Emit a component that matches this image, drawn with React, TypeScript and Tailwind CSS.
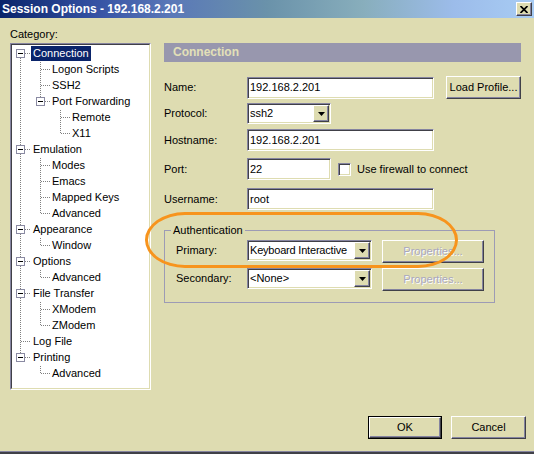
import React from 'react';

// Classic Win2000-style 3D edges, tinted for this colour scheme
const sunken =
  'border border-t-[#8584a0] border-l-[#8584a0] border-r-white border-b-white shadow-[inset_1px_1px_0_#404048,inset_-1px_-1px_0_#dedcb1]';
const raised =
  'border border-t-white border-l-white border-r-[#404048] border-b-[#404048] shadow-[inset_-1px_-1px_0_#8584a0]';

interface TreeNode {
  label: string;
  level: number;
  box?: boolean;
  selected?: boolean;
}

const tree: TreeNode[] = [
  { label: 'Connection', level: 0, box: true, selected: true },
  { label: 'Logon Scripts', level: 1 },
  { label: 'SSH2', level: 1 },
  { label: 'Port Forwarding', level: 1, box: true },
  { label: 'Remote', level: 2 },
  { label: 'X11', level: 2 },
  { label: 'Emulation', level: 0, box: true },
  { label: 'Modes', level: 1 },
  { label: 'Emacs', level: 1 },
  { label: 'Mapped Keys', level: 1 },
  { label: 'Advanced', level: 1 },
  { label: 'Appearance', level: 0, box: true },
  { label: 'Window', level: 1 },
  { label: 'Options', level: 0, box: true },
  { label: 'Advanced', level: 1 },
  { label: 'File Transfer', level: 0, box: true },
  { label: 'XModem', level: 1 },
  { label: 'ZModem', level: 1 },
  { label: 'Log File', level: 0 },
  { label: 'Printing', level: 0, box: true },
  { label: 'Advanced', level: 1 },
];

const cx = (level: number) => 8 + 20 * level;
const cy = (i: number) => 8 + 16 * i;
const indent = ['pl-[19px]', 'pl-[38px]', 'pl-[58px]'];

const TreeLines: React.FC = () => {
  const lines: { x1: number; y1: number; x2: number; y2: number }[] = [];
  let lastRoot = 0;
  tree.forEach((n, i) => {
    if (n.level === 0) lastRoot = i;
  });
  lines.push({ x1: cx(0), y1: cy(0), x2: cx(0), y2: cy(lastRoot) });
  tree.forEach((n, i) => {
    lines.push({ x1: cx(n.level), y1: cy(i), x2: cx(n.level) + 10, y2: cy(i) });
    if (n.box) {
      let last = -1;
      for (let j = i + 1; j < tree.length && tree[j].level > n.level; j++) {
        if (tree[j].level === n.level + 1) last = j;
      }
      if (last > 0) lines.push({ x1: cx(n.level + 1), y1: cy(i) + 8, x2: cx(n.level + 1), y2: cy(last) });
    }
  });
  return (
    <svg className="absolute left-0 top-0" width="137" height="343" shapeRendering="crispEdges">
      {lines.map((l, k) => (
        <line
          key={k}
          x1={l.x1 + 0.5}
          y1={l.y1 + 0.5}
          x2={l.x2 + 0.5}
          y2={l.y2 + 0.5}
          stroke="#808080"
          strokeDasharray="1 1"
        />
      ))}
      {tree.map((n, i) =>
        n.box ? (
          <g key={`b${i}`}>
            <rect x={cx(n.level) - 3.5} y={cy(i) - 3.5} width="8" height="8" fill="#fff" stroke="#8a8aa2" />
            <line x1={cx(n.level) - 2} y1={cy(i) + 0.5} x2={cx(n.level) + 3} y2={cy(i) + 0.5} stroke="#000" />
          </g>
        ) : null
      )}
    </svg>
  );
};

const TextBox: React.FC<{ value: string; className: string }> = ({ value, className }) => (
  <div className={`${sunken} ${className} bg-white flex items-center pl-[2px] whitespace-nowrap`}>{value}</div>
);

const Combo: React.FC<{ value: string; className: string }> = ({ value, className }) => (
  <div className={`${sunken} ${className} bg-white flex items-center pl-[2px]`}>
    <span className="flex-1 whitespace-nowrap overflow-hidden">{value}</span>
    <div className={`${raised} w-[16px] h-[17px] mr-[1px] shrink-0 bg-[#dedcb1] flex items-center justify-center`}>
      <svg width="7" height="4" viewBox="0 0 7 4">
        <path d="M0 0h7L3.5 4z" fill="#000" />
      </svg>
    </div>
  </div>
);

const Button: React.FC<{ children: React.ReactNode; className: string; disabled?: boolean }> = ({
  children,
  className,
  disabled,
}) => (
  <div
    className={`${raised} ${className} flex items-center justify-center whitespace-nowrap ${
      disabled ? 'text-[#a9a7bf] [text-shadow:1px_1px_0_#fff]' : ''
    }`}
  >
    {children}
  </div>
);

export default function App() {
  return (
    <div className="relative w-[534px] h-[454px] overflow-hidden bg-[#dedcb1] font-['Liberation_Sans',Arial,sans-serif] text-[11px] leading-[13px] text-black flex flex-col">
      {/* Title bar */}
      <div className="h-[18px] shrink-0 flex items-center justify-between pl-[2px] pr-[2px] bg-[linear-gradient(90deg,#0a246a_0%,#3552a4_18%,#5a78b8_32%,#6a92aa_50%,#88aebc_68%,#9cbcea_85%,#a8ccf4_100%)]">
        <span className="text-white font-bold text-[12px] leading-[18px]">Session Options - 192.168.2.201</span>
        <div className={`${raised} w-[16px] h-[14px] bg-[#dedcb1] flex items-center justify-center`}>
          <svg width="8" height="7" viewBox="0 0 8 7">
            <path d="M0.5 0L7.5 7M7.5 0L0.5 7" stroke="#000" strokeWidth="1.7" />
          </svg>
        </div>
      </div>

      <div className="flex h-[372px] shrink-0">
        {/* Category tree */}
        <div className="ml-[10px] w-[141px] flex flex-col">
          <div className="mt-[10px] h-[13px]">Category:</div>
          <div className="mt-[2px] h-[347px] bg-white border border-t-[#8584a0] border-l-[#8584a0] border-r-white border-b-white">
            <div className="h-full border border-t-[#404048] border-l-[#404048] border-r-[#dedcb1] border-b-[#dedcb1]">
              <div className="relative h-full">
                <TreeLines />
                <div className="relative">
                  {tree.map((n, i) => (
                    <div key={i} className={`h-[16px] flex items-center ${indent[n.level]}`}>
                      <span
                        className={`px-[2px] leading-[15px] whitespace-nowrap ${
                          n.selected ? 'bg-[#0a246a] text-white' : ''
                        }`}
                      >
                        {n.label}
                      </span>
                    </div>
                  ))}
                </div>
              </div>
            </div>
          </div>
        </div>

        {/* Connection page */}
        <div className="ml-[13px] w-[357px] pt-[25px] flex flex-col">
          <div className="h-[19px] bg-[#9897ae] pl-[9px] flex items-center">
            <span className="font-bold text-[12px] text-[#e3e0b8]">Connection</span>
          </div>

          <div className="mt-[14px] h-[23px] flex items-center">
            <span className="w-[83px]">Name:</span>
            <TextBox value="192.168.2.201" className="w-[187px] h-[22px]" />
            <Button className="ml-[12px] w-[75px] h-[23px]">Load Profile...</Button>
          </div>

          <div className="mt-[4px] h-[21px] flex items-center">
            <span className="w-[83px]">Protocol:</span>
            <Combo value="ssh2" className="w-[84px] h-[21px]" />
          </div>

          <div className="mt-[5px] h-[22px] flex items-center">
            <span className="w-[83px]">Hostname:</span>
            <TextBox value="192.168.2.201" className="w-[187px] h-[22px]" />
          </div>

          <div className="mt-[7px] h-[22px] flex items-center">
            <span className="w-[83px]">Port:</span>
            <TextBox value="22" className="w-[84px] h-[22px]" />
            <div className={`${sunken} ml-[7px] w-[13px] h-[13px] bg-white`} />
            <span className="ml-[6px]">Use firewall to connect</span>
          </div>

          <div className="mt-[8px] h-[22px] flex items-center">
            <span className="w-[83px]">Username:</span>
            <TextBox value="root" className="w-[187px] h-[22px]" />
          </div>

          <fieldset className="mt-[14px] w-[331px] border border-[#9d9bb5]">
            <legend className="ml-[6px] px-[2px]">Authentication</legend>
            <div className="pl-[11px] pt-[3px] pb-[11px]">
              <div className="h-[23px] flex items-start">
                <span className="w-[71px] h-[21px] flex items-center">Primary:</span>
                <Combo value="Keyboard Interactive" className="w-[125px] h-[21px] tracking-[-0.2px]" />
                <Button disabled className="ml-[10px] w-[102px] h-[23px]">
                  Properties...
                </Button>
              </div>
              <div className="mt-[5px] h-[23px] flex items-start">
                <span className="w-[71px] h-[21px] flex items-center">Secondary:</span>
                <Combo value="<None>" className="w-[125px] h-[21px]" />
                <Button disabled className="ml-[10px] w-[102px] h-[23px]">
                  Properties...
                </Button>
              </div>
            </div>
          </fieldset>
        </div>
      </div>

      {/* Dialog buttons */}
      <div className="mt-[26px] pr-[8px] flex justify-end gap-[9px]">
        <div className="w-[74px] h-[23px] border border-black flex">
          <div className={`${raised} flex-1 flex items-center justify-center`}>OK</div>
        </div>
        <Button className="w-[75px] h-[23px]">Cancel</Button>
      </div>

      <div className="mt-auto h-[3px] border-t border-[#8584a0] bg-[#404048]" />

      {/* Orange annotation ring */}
      <div className="absolute left-[145px] top-[212px] w-[313px] h-[56px] border-[3px] border-[#f7941d] rounded-[40px_/_28px] pointer-events-none" />
    </div>
  );
}
